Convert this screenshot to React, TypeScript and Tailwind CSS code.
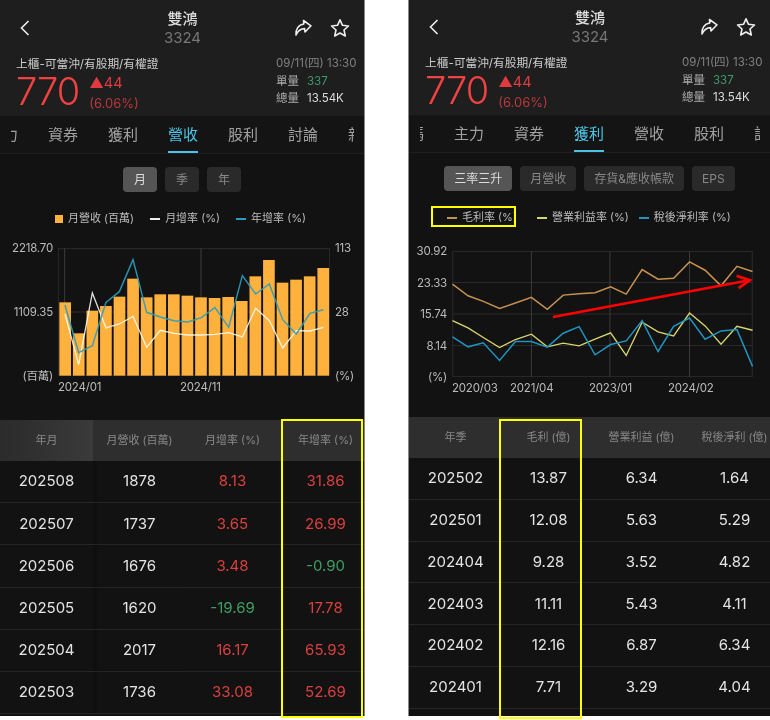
import React from "react";

const FONT = "font-['Inter','Noto_Sans_CJK_TC',sans-serif]";

const pts = (a: number[][]) => a.map((p) => p.join(",")).join(" ");

function Header({ active, tabs, tabOffset, segs, activeSeg }: { active: string; tabs: string[]; tabOffset: string; segs: string[]; activeSeg: string }) {
  return (
    <>
      <div className="h-[116px] shrink-0 bg-[#1e1e1e] flex flex-col px-4">
        <div className="h-[57px] flex items-start relative">
          <svg width="12" height="18" viewBox="0 0 12 18" className="mt-[19px] ml-[3px]" fill="none" stroke="#eee" strokeWidth="1.6">
            <path d="M9.5 2 L2.5 9 L9.5 16" />
          </svg>
          <div className="flex-1 flex flex-col items-center mt-[9px] ml-[41px]">
            <div className="text-[15px] leading-[19px] font-medium text-[#ddd]">雙鴻</div>
            <div className="text-[15px] leading-[19px] text-[#777]">3324</div>
          </div>
          <div className="flex items-center gap-[17px] mt-[18px] -mr-[2px]">
            <svg width="20" height="20" viewBox="0 0 20 20" fill="none" stroke="#eee" strokeWidth="1.6" strokeLinejoin="round">
              <path d="M10.5 2.5 L18 7.8 L12 14 L11.6 10.6 C8 10.6 5 12.6 3 17 C2.4 11.5 5.5 6.6 10.8 6 Z" />
            </svg>
            <svg width="20" height="20" viewBox="0 0 20 20" fill="none" stroke="#eee" strokeWidth="1.6" strokeLinejoin="round">
              <path d="M10 1.8 L12.5 7.3 L18.5 8 L14 12 L15.3 18 L10 15 L4.7 18 L6 12 L1.5 8 L7.5 7.3 Z" />
            </svg>
          </div>
        </div>
        <div className="flex justify-between">
          <div className="flex flex-col">
            <div className="text-[11.7px] leading-[16px] text-[#ccc] whitespace-nowrap -mt-[1px]">上櫃-可當沖/有股期/有權證</div>
            <div className="flex items-start gap-[10px] mt-[1px]">
              <div className="text-[38px] leading-[36px] font-light tracking-[-1px] text-[#f04242]">770</div>
              <div className="flex flex-col gap-[4px] mt-[1px]">
                <div className="text-[14.5px] leading-[17px] text-[#e03c40]">▲44</div>
                <div className="text-[13px] leading-[17px] text-[#b8383c]">(6.06%)</div>
              </div>
            </div>
          </div>
          <div className="flex flex-col w-[80px] -mr-[8px] text-[11.5px] leading-[17.5px] whitespace-nowrap -mt-[2px]">
            <div className="text-[#808080]">09/11(四) 13:30</div>
            <div className="flex gap-[8px] text-[#aaa]"><span className="w-[23px]">單量</span><span className="text-[#3f9a68]">337</span></div>
            <div className="flex gap-[8px] text-[#aaa]"><span className="w-[23px]">總量</span><span className="text-[#ddd]">13.54K</span></div>
          </div>
        </div>
      </div>
      <div className="h-[38px] shrink-0 bg-[#141414] border-b border-[#1e1e1e] pl-[11px] pr-[10px]">
        <div className="overflow-hidden h-full">
          <div className={`flex h-full ${tabOffset}`}>
            {tabs.map((t) => (
              <div key={t} className={`w-[60px] shrink-0 flex flex-col items-center justify-between text-[15px] ${t === active ? "text-[#4cc3e6]" : "text-[#a0a0a0]"}`}>
                <span className="leading-[38px] h-[35px]">{t}</span>
                {t === active ? <span className="w-[30px] h-[3px] bg-[#4cc3e6]" /> : null}
              </div>
            ))}
          </div>
        </div>
      </div>
      <div className="flex justify-center gap-[8px] pt-[13px] bg-[#121212]">
        {segs.map((s) => (
          <div key={s} className={`h-[25px] min-w-[34px] px-[10px] rounded-[4px] flex items-center justify-center text-[12px] ${s === activeSeg ? "bg-[#555] text-[#ddd]" : "bg-[#2a2a2a] text-[#888]"}`}>{s}</div>
        ))}
      </div>
    </>
  );
}

function Legend({ items, className }: { items: { label: string; color: string; square?: boolean; cls?: string }[]; className: string }) {
  return (
    <div className={`flex text-[11px] text-[#bbb] whitespace-nowrap ${className}`}>
      {items.map((it) => (
        <div key={it.label} className={`flex items-center gap-[5px] ${it.cls ?? ""}`}>
          {it.square ? <span className="w-[8px] h-[8px] bg-[#ffb13d]" /> : <span className="w-[10px] h-[2px]" style={{ background: it.color }} />}
          <span>{it.label}</span>
        </div>
      ))}
    </div>
  );
}

const heads = [310, 403, 335, 321, 293, 239, 295, 286, 286, 290, 295, 297, 294, 306, 232, 183, 251, 242, 232, 207];
const white = [[195,345],[236,497],[277,282],[318,387],[358,375],[399,352],[440,445],[481,394],[522,403],[563,408],[604,408],[645,406],[686,401],[727,414],[767,328],[808,365],[848,447],[889,395],[930,396],[970,385]];
const blue = [[195,318],[236,461],[277,440],[318,310],[358,278],[399,182],[440,340],[481,354],[522,365],[563,369],[604,356],[645,326],[686,385],[727,230],[767,285],[808,255],[848,362],[889,405],[930,343],[970,332]];

function RevenueChart() {
  return (
    <div className="flex mt-[22px] text-[11.5px] tracking-[-0.2px] leading-[17px] text-[#bbb]">
      <div className="w-[53px] h-[145px] -my-[8px] shrink-0 flex flex-col justify-between items-end">
        <span>2218.70</span><span>1109.35</span><span>(百萬)</span>
      </div>
      <div className="w-[272px] ml-[5px] shrink-0">
        <svg width="272" height="128" viewBox="174 148 816 382" className="block">
          <rect x="175" y="149" width="814" height="380" fill="none" stroke="#2c2c2c" strokeWidth="3" />
          <line x1="174" x2="990" y1="339" y2="339" stroke="#2c2c2c" strokeWidth="3" />
          <line x1="194" x2="194" y1="148" y2="530" stroke="#3c3c3c" strokeWidth="3" />
          <line x1="603" x2="603" y1="148" y2="530" stroke="#3c3c3c" strokeWidth="3" />
          {heads.map((h, i) => (
            <rect key={i} x={178 + i * 40.75} y={h} width="35" height={530 - h} fill="#ffb13d" />
          ))}
          <polyline points={pts(white)} fill="none" stroke="#fff" strokeOpacity="0.85" strokeWidth="4" />
          <polyline points={pts(blue)} fill="none" stroke="#2a9cc0" strokeOpacity="0.9" strokeWidth="4.5" />
        </svg>
        <div className="flex mt-[3px] leading-[16px]">
          <span className="w-[122px]">2024/01</span><span>2024/11</span>
        </div>
      </div>
      <div className="w-[30px] h-[145px] -my-[8px] ml-[5px] shrink-0 flex flex-col justify-between">
        <span>113</span><span>28</span><span>(%)</span>
      </div>
    </div>
  );
}

const orange = [[155,255],[202,290],[248,307],[297,328],[345,312],[393,295],[441,331],[489,288],[537,284],[585,281],[632,263],[679,285],[727,211],[775,240],[822,237],[870,188],[917,213],[965,260],[1013,201],[1060,217]];
const yellow = [[155,365],[202,387],[248,416],[297,446],[345,422],[393,406],[441,444],[489,433],[537,441],[585,421],[632,402],[679,470],[727,370],[775,399],[822,411],[870,342],[917,381],[965,436],[1013,382],[1060,394]];
const blue2 = [[155,414],[202,444],[248,432],[297,485],[345,428],[393,428],[441,445],[489,403],[537,383],[585,468],[632,437],[679,426],[727,365],[775,458],[822,382],[870,357],[917,421],[965,396],[1013,392],[1060,503]];

function MarginChart() {
  return (
    <div className="flex mt-[26px] text-[11.5px] tracking-[-0.2px] leading-[17px] text-[#bbb]">
      <div className="w-[38px] h-[143px] -my-[8px] shrink-0 flex flex-col justify-between items-end">
        <span>30.92</span><span>23.33</span><span>15.74</span><span>8.14</span><span>(%)</span>
      </div>
      <div className="w-[301px] ml-[5px] shrink-0">
        <svg width="301" height="126" viewBox="155 155 905 380" className="block">
          <rect x="156" y="156" width="903" height="378" fill="none" stroke="#2c2c2c" strokeWidth="3" />
          {[250, 345, 440].map((y) => <line key={y} x1="155" x2="1060" y1={y} y2={y} stroke="#2a2a2a" strokeWidth="3" />)}
          {[393, 630, 870].map((x) => <line key={x} x1={x} x2={x} y1="155" y2="535" stroke="#3c3c3c" strokeWidth="3" />)}
          <polyline points={pts(orange)} fill="none" stroke="#c8924e" strokeWidth="4.5" />
          <polyline points={pts(yellow)} fill="none" stroke="#d8d56f" strokeWidth="4" />
          <polyline points={pts(blue2)} fill="none" stroke="#1e95c0" strokeWidth="4.5" />
          <path d="M458 354 L1050 243 M1012 230 L1052 243 L1018 267" fill="none" stroke="#ff0000" strokeWidth="8" />
        </svg>
        <div className="flex mt-[3px] leading-[16px] whitespace-nowrap">
          <span className="w-[58px]">2020/03</span><span className="w-[79px]">2021/04</span><span className="w-[79px]">2023/01</span><span>2024/02</span>
        </div>
      </div>
    </div>
  );
}

function Table({ cols, rows, shadow, cls, rowCls }: { cols: string[]; rows: (string | [string, "r" | "g"])[][]; shadow?: boolean; cls: string; rowCls: string }) {
  return (
    <div className={`overflow-hidden flex-1 bg-[#121212] ${cls}`}>
      <div className="w-[372px]">
        <div className="grid grid-cols-4 h-[41px] bg-[#2e2e2e] text-[11px] text-[#888]">
          {cols.map((c, i) => (
            <div key={c} className={`flex items-center justify-center whitespace-nowrap ${i === 0 && shadow ? "bg-gradient-to-r from-[#2b2b2b] to-[#3a3a3a]" : ""}`}>{c}</div>
          ))}
        </div>
        {rows.map((r, idx) => (
          <div key={idx} className={`grid grid-cols-4 border-b border-[#252525] text-[15px] ${rowCls}`}>
            {r.map((c, i) => {
              const txt = Array.isArray(c) ? c[0] : c;
              const col = Array.isArray(c) ? (c[1] === "r" ? "text-[#d9403f]" : "text-[#3f9e62]") : "text-[#e4e4e4]";
              return <div key={i} className={`flex items-center justify-center ${col} ${i === 1 && shadow ? "bg-gradient-to-r from-[#0e0e0e] to-[#121212] to-[8%]" : ""}`}>{txt}</div>;
            })}
          </div>
        ))}
      </div>
    </div>
  );
}

const R = (s: string): [string, "r"] => [s, "r"];
const G = (s: string): [string, "g"] => [s, "g"];

export default function App() {
  return (
    <div className={`relative w-[770px] h-[720px] bg-white overflow-hidden flex justify-between items-start blur-[0.35px] ${FONT}`}>
      <div className="w-[365px] h-[716px] bg-[#121212] flex flex-col border-r border-[#888]">
        <Header active="營收" tabs={["主力", "資券", "獲利", "營收", "股利", "討論", "新聞"]} tabOffset="-ml-[38px]" segs={["月", "季", "年"]} activeSeg="月" />
        <Legend
          className="mt-[19px] pl-[55px] gap-[16px] h-[15px]"
          items={[
            { label: "月營收 (百萬)", color: "#ffb13d", square: true },
            { label: "月增率 (%)", color: "#eee" },
            { label: "年增率 (%)", color: "#2a9cc0" },
          ]}
        />
        <RevenueChart />
        <Table
          shadow
          cls="mt-[25px]"
          rowCls="h-[42.2px]"
          cols={["年月", "月營收 (百萬)", "月增率 (%)", "年增率 (%)"]}
          rows={[
            ["202508", "1878", R("8.13"), R("31.86")],
            ["202507", "1737", R("3.65"), R("26.99")],
            ["202506", "1676", R("3.48"), G("-0.90")],
            ["202505", "1620", G("-19.69"), R("17.78")],
            ["202504", "2017", R("16.17"), R("65.93")],
            ["202503", "1736", R("33.08"), R("52.69")],
          ]}
        />
      </div>
      <div className="w-[362px] h-[717px] -mt-[1px] bg-[#121212] flex flex-col border-l border-[#888]">
        <Header active="獲利" tabs={["籌碼", "主力", "資券", "獲利", "營收", "股利", "討論"]} tabOffset="-ml-[41px]" segs={["三率三升", "月營收", "存貨&應收帳款", "EPS"]} activeSeg="三率三升" />
        <Legend
          className="mt-[19px] pl-[38px] gap-[10px] h-[15px]"
          items={[
            { label: "毛利率 (%)", color: "#c8924e", cls: "mr-[10px]" },
            { label: "營業利益率 (%)", color: "#d8d56f" },
            { label: "稅後淨利率 (%)", color: "#1e95c0" },
          ]}
        />
        <MarginChart />
        <Table
          cls="mt-[21px]"
          rowCls="h-[41.8px]"
          cols={["年季", "毛利 (億)", "營業利益 (億)", "稅後淨利 (億)"]}
          rows={[
            ["202502", "13.87", "6.34", "1.64"],
            ["202501", "12.08", "5.63", "5.29"],
            ["202404", "9.28", "3.52", "4.82"],
            ["202403", "11.11", "5.43", "4.11"],
            ["202402", "12.16", "6.87", "6.34"],
            ["202401", "7.71", "3.29", "4.04"],
            ["", "", "", ""],
          ]}
        />
      </div>
      <div className="absolute left-[281px] top-[419px] w-[82px] h-[299px] border-2 border-[#ffff00]" />
      <div className="absolute left-[499px] top-[419px] w-[83px] h-[300px] border-2 border-[#ffff00]" />
      <div className="absolute left-[431px] top-[206px] w-[85px] h-[21px] border-2 border-[#ffff00]" />
    </div>
  );
}
